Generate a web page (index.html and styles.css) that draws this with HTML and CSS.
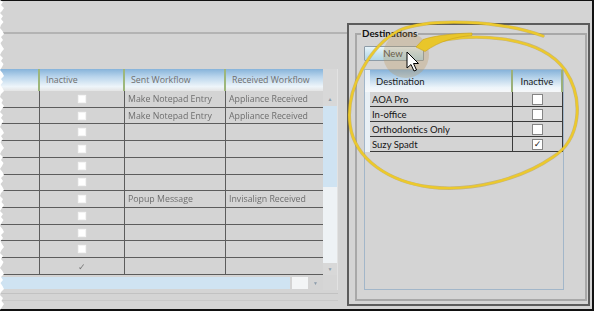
FILE: index.html
```html
<!DOCTYPE html>
<html>
<head>
<meta charset="utf-8">
<link rel="stylesheet" href="styles.css">
</head>
<body>
<div class="page">
  <div class="frame">
    <div class="backwin">
      <div class="toolbar"></div>
      <div class="grid">
        <div class="gh c0"></div>
        <div class="gh c1">Inactive</div>
        <div class="gh c2">Sent Workflow</div>
        <div class="gh c3">Received Workflow</div>
        <div class="gh c4"></div>

        <div class="gc c0"></div><div class="gc c1"><span class="dot"></span></div><div class="gc c2">Make Notepad Entry</div><div class="gc c3">Appliance Received</div>
        <div class="vscroll">
          <div class="sarrow">&#9650;</div>
          <div class="sthumb"></div>
          <div class="strack"></div>
          <div class="sarrow">&#9660;</div>
        </div>
        <div class="gc c0"></div><div class="gc c1"><span class="dot"></span></div><div class="gc c2">Make Notepad Entry</div><div class="gc c3">Appliance Received</div>
        <div class="gc c0"></div><div class="gc c1"><span class="dot"></span></div><div class="gc c2"></div><div class="gc c3"></div>
        <div class="gc c0"></div><div class="gc c1"><span class="dot"></span></div><div class="gc c2"></div><div class="gc c3"></div>
        <div class="gc c0"></div><div class="gc c1"><span class="dot"></span></div><div class="gc c2"></div><div class="gc c3"></div>
        <div class="gc c0"></div><div class="gc c1"><span class="dot"></span></div><div class="gc c2"></div><div class="gc c3"></div>
        <div class="gc c0"></div><div class="gc c1"><span class="dot"></span></div><div class="gc c2">Popup Message</div><div class="gc c3">Invisalign Received</div>
        <div class="gc c0"></div><div class="gc c1"><span class="dot"></span></div><div class="gc c2"></div><div class="gc c3"></div>
        <div class="gc c0"></div><div class="gc c1"><span class="dot"></span></div><div class="gc c2"></div><div class="gc c3"></div>
        <div class="gc c0"></div><div class="gc c1"><span class="dot"></span></div><div class="gc c2"></div><div class="gc c3"></div>
        <div class="gc c0"></div><div class="gc c1"><span class="tick">&#10003;</span></div><div class="gc c2"></div><div class="gc c3"></div>

        <div class="hscroll">
          <div class="hthumb"></div>
          <div class="hbox"></div>
          <div class="harrow">&#9660;</div>
        </div>
        <div class="corner"></div>
      </div>
      <div class="gfoot"></div>
    </div>

    <div class="dest">
      <fieldset class="group">
        <legend>Destinations</legend>
        <button class="newbtn">New</button>
        <div class="dtable">
          <div class="drow dhead">
            <div class="rh"></div>
            <div class="hd hd-dest">Destination</div>
            <div class="hd hd-inact">Inactive</div>
          </div>
          <div class="drow">
            <div class="rh"></div>
            <div class="dc">AOA Pro</div>
            <div class="ic"><span class="cb"></span></div>
          </div>
          <div class="drow">
            <div class="rh"></div>
            <div class="dc">In-office</div>
            <div class="ic"><span class="cb"></span></div>
          </div>
          <div class="drow">
            <div class="rh"></div>
            <div class="dc">Orthodontics Only</div>
            <div class="ic"><span class="cb"></span></div>
          </div>
          <div class="drow">
            <div class="rh"></div>
            <div class="dc">Suzy Spadt</div>
            <div class="ic"><span class="cb checked">&#10003;</span></div>
          </div>
        </div>
      </fieldset>
    </div>
  </div>

  <svg class="annot" width="595" height="312" viewBox="0 0 595 312">
    <circle cx="406" cy="55" r="23" fill="rgba(190,150,90,0.30)"/>
    <path d="M 420 46 C 470 30, 540 35, 565 70 C 585 100, 580 140, 553 157 C 520 180, 470 192, 430 187 C 390 182, 355 160, 350 125 C 345 90, 370 45, 400 30 C 430 18, 500 20, 543 36" fill="none" stroke="#b39114" stroke-width="3.4" stroke-linecap="round" opacity="0.45"/>
    <path d="M 420 46 C 470 30, 540 35, 565 70 C 585 100, 580 140, 553 157 C 520 180, 470 192, 430 187 C 390 182, 355 160, 350 125 C 345 90, 370 45, 400 30 C 430 18, 500 20, 543 36" fill="none" stroke="#ecc92c" stroke-width="2.3" stroke-linecap="round"/>
    <path d="M 416 47 L 423 39.5 C 436 35.5, 452 33.5, 472 33 L 472 35.5 C 454 37, 440 41, 425 51.5 Z" fill="#e9c62a" stroke="#c9a31a" stroke-width="0.6"/>
    <path d="M407 52 L407 68 L411 64.5 L414 71 L416.5 70 L413.5 63.5 L418.5 63.5 Z" fill="#fff" stroke="#000" stroke-width="1" stroke-linejoin="round"/>
  </svg>

  <svg class="torn" width="6" height="312" viewBox="0 0 6 312">
    <polygon fill="#fff" points="0,0 3,2 1,5 4,8 2,11 0,13 3,16 1,19 3.5,22 1,25 0,28 2.5,31 4,34 1,37 3,40 0.5,43 2,46 4,49 1.5,52 0,55 3,58 1,61 3.5,64 2,67 0,70 2.5,73 4,76 1,79 3,82 0.5,85 2.5,88 4,91 1,94 0,97 3,100 1.5,103 4,106 2,109 0,112 3,115 1,118 3.5,121 1.5,124 0,127 2.5,130 4,133 1,136 3,139 0.5,142 2,145 4,148 1.5,151 0,154 3,157 1,160 3.5,163 2,166 0,169 2.5,172 4,175 1,178 3,181 0.5,184 2.5,187 4,190 1,193 0,196 3,199 1.5,202 4,205 2,208 0,211 3,214 1,217 3.5,220 1.5,223 0,226 2.5,229 4,232 1,235 3,238 0.5,241 2,244 4,247 1.5,250 0,253 3,256 1,259 3.5,262 2,265 0,268 2.5,271 4,274 1,277 3,280 0.5,283 2.5,286 4,289 1,292 0,295 3,298 1.5,301 4,304 2,307 0,310 0,312"/>
  </svg>
</div>
</body>
</html>
```

FILE: styles.css
```css
* { box-sizing: border-box; }
html, body { margin: 0; padding: 0; background: #fff; }
body { font-family: Lato, "Open Sans", sans-serif; }

.page { position: relative; width: 595px; height: 312px; overflow: hidden; }

.frame {
  display: flex;
  width: 594px;
  height: 311px;
  border-top: 1px solid #111;
  border-right: 2px solid #111;
  border-bottom: 2px solid #111;
  background: #d4d4d4;
}

/* ---------- blurred background window ---------- */
.backwin {
  width: 347px;
  flex: none;
  display: flex;
  flex-direction: column;
  filter: blur(0.5px);
}
.toolbar {
  height: 33px;
  border-bottom: 2px solid #b3b3b3;
}
.grid {
  margin-top: 35px;
  width: 338px;
  display: grid;
  grid-template-columns: 40px 85px 101px 97px 14px;
  grid-template-rows: 22px repeat(11, 16.73px) 15px;
  border-right: 1px solid #e2e2e2;
  font-family: "Open Sans", sans-serif;
  font-size: 8.8px;
  color: #6e6e6e;
}
.gh {
  background: linear-gradient(#86b3da 0%, #b9d5ec 35%, #eef5fa 80%, #e4e4e4 100%);
  display: flex;
  align-items: center;
  padding-left: 6px;
  border-right: 2px solid #9db77c;
}
.gh.c3 { border-right: none; }
.gh.c4 { background: #d8d8d8; border-right: none; }
.gc {
  border-bottom: 1px solid #5c5c5c;
  border-right: 1px solid #5c5c5c;
  display: flex;
  align-items: center;
  padding-left: 3px;
  white-space: nowrap;
  overflow: hidden;
}
.gc.c3 { border-right: none; }
.gc.c1 { justify-content: center; padding-left: 0; }
.dot {
  width: 6px; height: 6px;
  background: #fff;
  box-shadow: 0 0 1px 1px #f4f4f4;
}
.tick { font-size: 9px; color: #777; }

.vscroll {
  grid-column: 5;
  grid-row: 2 / span 11;
  display: flex;
  flex-direction: column;
  background: #d8d8d8;
}
.sarrow {
  height: 15px;
  font-size: 5px;
  color: #8c9cab;
  display: flex;
  align-items: center;
  justify-content: center;
}
.sarrow:last-child { height: 12px; }
.sthumb { height: 81px; background: #cfe3f2; }
.strack { flex: 1; background: #eef2f5; }

.hscroll {
  grid-column: 1 / 5;
  grid-row: 13;
  padding-top: 2px;
  display: flex;
}
.hthumb { width: 290px; height: 12px; background: #cfe3f2; }
.hbox { width: 16px; height: 12px; margin-left: 2px; background: #f3f5f6; }
.harrow {
  width: 15px; height: 12px;
  font-size: 5px; color: #8c9cab;
  display: flex; align-items: center; justify-content: center;
}
.corner { grid-column: 5; grid-row: 13; background: #d6d6d6; }
.gfoot {
  margin-top: 3px;
  width: 338px;
  height: 8px;
  border-top: 1px solid #c2c2c2;
  border-bottom: 1px solid #c8c8c8;
}

/* ---------- Destinations panel ---------- */
.dest {
  margin-top: 22px;
  width: 243px;
  height: 283px;
  flex: none;
  border: 2px solid #5c5c5c;
  padding: 2px 1px 3px 6px;
  display: flex;
}
.group {
  flex: 1;
  margin: 0;
  padding: 0;
  min-width: 0;
  border: 2px solid #a8a8a8;
}
.group legend {
  margin-left: 4px;
  padding: 0 1px;
  font-size: 9.8px;
  line-height: 13px;
  font-weight: bold;
  color: #111;
}
.newbtn {
  display: flex;
  align-items: center;
  justify-content: center;
  margin: 6px 0 0 7px;
  width: 60px;
  height: 15px;
  padding: 0 2px 0 0;
  border: 1px solid #8d9ca8;
  border-radius: 1px;
  background: linear-gradient(#e8f4fa 0%, #c9e4ef 50%, #b3d7e6 100%);
  font-family: Lato, "Open Sans", sans-serif;
  font-size: 9.6px;
  color: #444;
}
.dtable {
  margin: 8px 0 0 7px;
  width: 200px;
  height: 221px;
  border: 1px solid #a2b6c9;
}
.drow {
  display: grid;
  grid-template-columns: 5px 143px 50px;
  height: 15px;
  font-size: 9.5px;
  color: #141414;
}
.drow .rh { background: #e9f0f5; }
.dhead { height: 22px; }
.dhead .rh { background: linear-gradient(#dfeaf4, #f6f9fb); }
.hd {
  background: linear-gradient(#87b3da 0%, #b6d3ea 35%, #eef5fa 80%, #f6f8fa 100%);
  display: flex;
  align-items: center;
  border-right: 2px solid #9bb079;
  color: #1a1a1a;
}
.hd-dest { padding-left: 6px; }
.hd-inact { justify-content: center; }
.dc {
  display: flex;
  align-items: center;
  padding-left: 2px;
  border-bottom: 1px solid #3a3a3a;
  border-right: 1px solid #3a3a3a;
  white-space: nowrap;
}
.ic {
  display: flex;
  align-items: center;
  justify-content: center;
  border-bottom: 1px solid #3a3a3a;
  border-right: 1px solid #3a3a3a;
}
.cb {
  width: 11px; height: 11px;
  background: #fff;
  border: 1px solid #858585;
  display: flex;
  align-items: center;
  justify-content: center;
  font-size: 9px;
  line-height: 1;
  color: #222;
  font-family: "DejaVu Sans", sans-serif;
}

/* ---------- overlays ---------- */
.annot { position: absolute; left: 0; top: 0; pointer-events: none; }
.torn { position: absolute; left: 0; top: 0; }
```
